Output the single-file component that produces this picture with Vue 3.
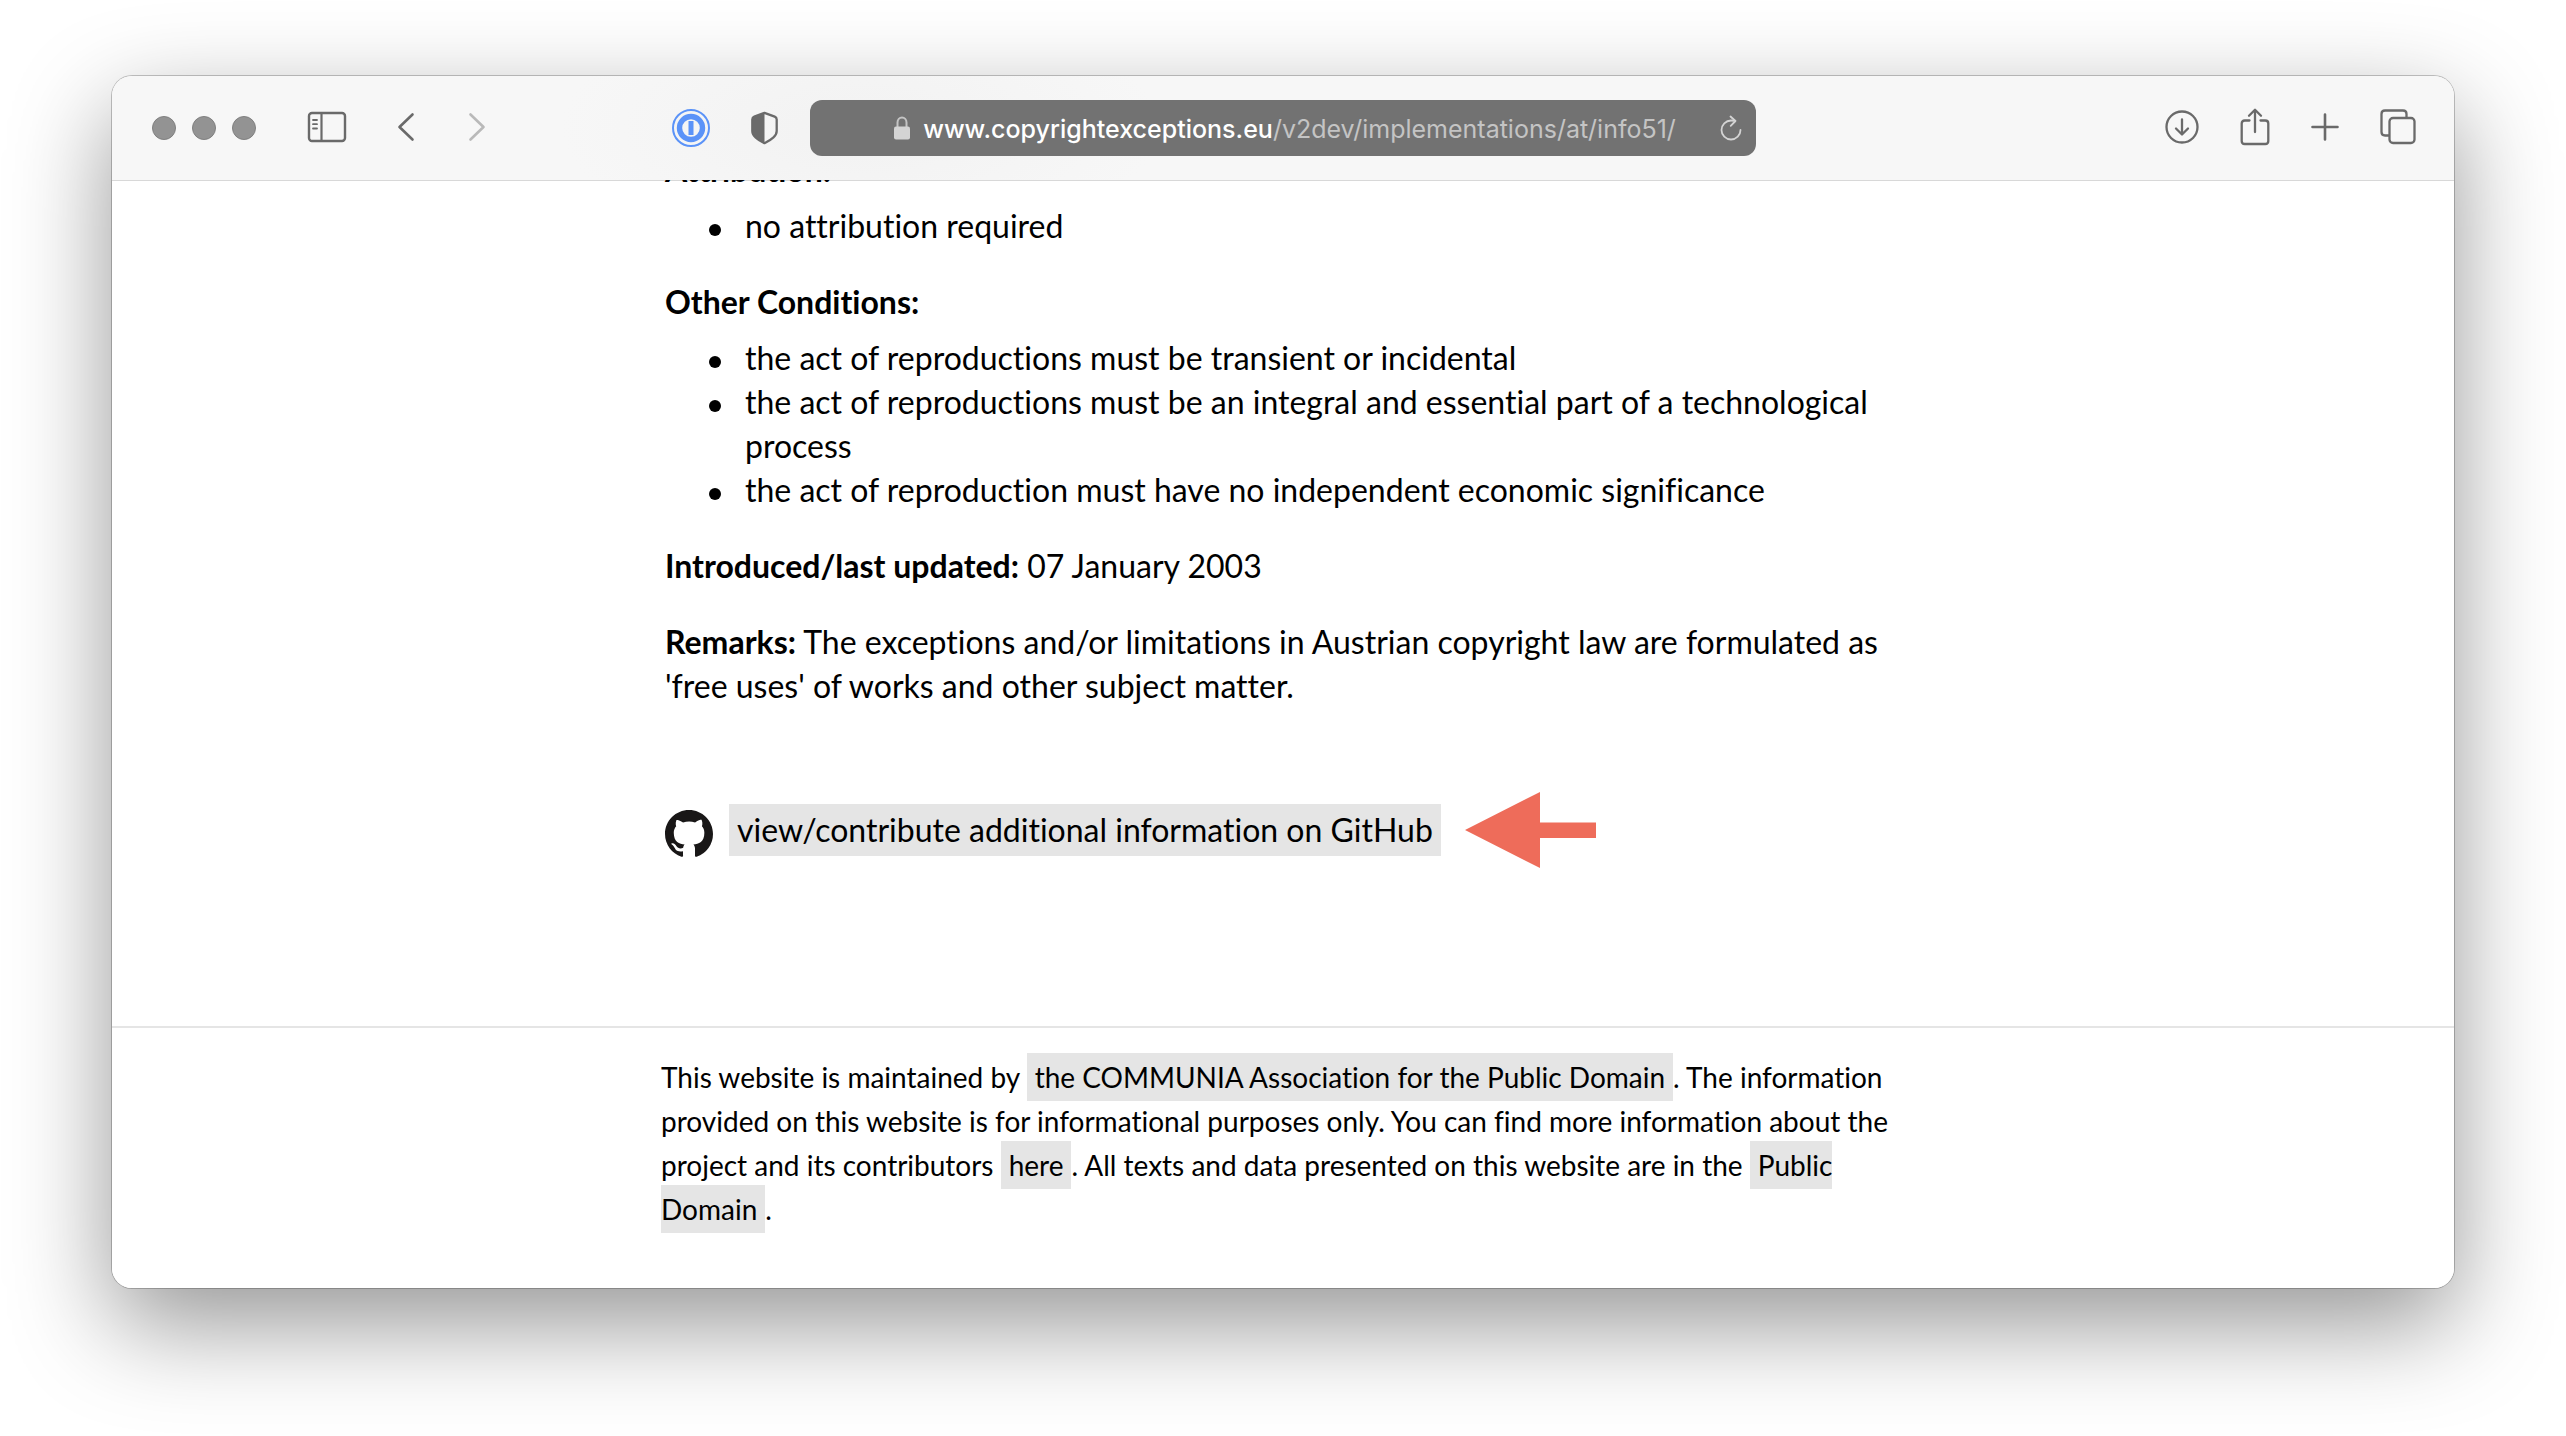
<script setup>
const conditions = [
  'the act of reproductions must be transient or incidental',
  'the act of reproductions must be an integral and essential part of a technological process',
  'the act of reproduction must have no independent economic significance',
]
</script>

<template>
  <div class="desktop">
    <div class="window">
      <header class="toolbar">
        <div class="side">
          <div class="lights">
            <button class="light" aria-label="Close"></button>
            <button class="light" aria-label="Minimize"></button>
            <button class="light" aria-label="Zoom"></button>
          </div>
          <button class="tool sidebar" aria-label="Show sidebar">
            <svg width="40" height="32" viewBox="0 0 40 32" fill="none" stroke="#6a6a6a">
              <rect x="2" y="2" width="36" height="28" rx="3" stroke-width="2.4" />
              <path d="M14.5 2v28" stroke-width="2.2" />
              <path d="M6 9h4M6 13.200h4M6 17.500h4" stroke-width="1.8" stroke-linecap="round" />
            </svg>
          </button>
          <button class="tool back" aria-label="Back">
            <svg width="18" height="30" viewBox="0 0 18 30" fill="none" stroke="#6a6a6a" stroke-width="2.600" stroke-linecap="round" stroke-linejoin="round">
              <path d="M15.500 2.500 2.500 15l13 12.500" />
            </svg>
          </button>
          <button class="tool forward" aria-label="Forward" disabled>
            <svg width="18" height="30" viewBox="0 0 18 30" fill="none" stroke="#b9b9b9" stroke-width="2.600" stroke-linecap="round" stroke-linejoin="round">
              <path d="M2.500 2.500l13 12.500-13 12.500" />
            </svg>
          </button>
          <div class="extensions">
            <button class="tool" aria-label="1Password">
              <svg width="38" height="38" viewBox="0 0 38 38" fill="none">
                <circle cx="19" cy="19" r="18" stroke="#5b93f8" stroke-width="2" />
                <circle cx="19" cy="19" r="11.500" stroke="#5b93f8" stroke-width="5.400" />
                <rect x="16.500" y="12" width="5" height="14" fill="#5b93f8" />
              </svg>
            </button>
            <button class="tool" aria-label="Privacy report">
              <svg width="27" height="34" viewBox="0 0 27 34">
                <path d="M13.500 1.800 3.300 5.600Q1.300 6.400 1.300 8.500V20q0 3.600 3.200 6.300 3.500 3.200 9 5.900 5.500-2.700 9-5.900 3.200-2.700 3.200-6.300V8.500q0-2.100-2-2.900Z" fill="none" stroke="#6a6a6a" stroke-width="2.300" stroke-linejoin="round" />
                <path d="M13.500 1.800 3.300 5.600Q1.300 6.400 1.300 8.500V20q0 3.600 3.200 6.300 3.500 3.200 9 5.900Z" fill="#6a6a6a" />
              </svg>
            </button>
          </div>
        </div>

        <div class="address">
          <button class="url">
            <svg class="lock" width="16" height="24" viewBox="0 0 16 24">
              <path d="M3.500 12V6.500a4.500 5 0 0 1 9 0V12" fill="none" stroke="#c4c4c4" stroke-width="2" />
              <rect x="0" y="10.500" width="16" height="13" rx="2" fill="#d4d4d4" />
            </svg>
            <span><span class="host">www.copyrightexceptions.eu</span>/v2dev/implementations/at/info51/</span>
          </button>
          <button class="tool reload" aria-label="Reload">
            <svg width="22" height="26" viewBox="0 0 22 26" fill="none" stroke="#d4d4d4" stroke-width="1.800" stroke-linecap="round" stroke-linejoin="round">
              <path d="M20.500 15A9.500 9.500 0 1 1 11 5.500q2 0 4 .4" />
              <path d="M10.500 1.500l5 4.500-4.800 4.800" />
            </svg>
          </button>
        </div>

        <div class="side actions">
          <button class="tool" aria-label="Downloads">
            <svg width="34" height="34" viewBox="0 0 34 34" fill="none" stroke="#6a6a6a" stroke-width="2.300" stroke-linecap="round" stroke-linejoin="round">
              <circle cx="17" cy="17" r="15.500" />
              <path d="M17 9.500V24M11 18.500l6 6 6-6" />
            </svg>
          </button>
          <button class="tool" aria-label="Share">
            <svg width="30" height="38" viewBox="0 0 30 38" fill="none" stroke="#6a6a6a" stroke-width="2.300" stroke-linecap="round" stroke-linejoin="round">
              <path d="M9.500 12.500H4.700q-3 0-3 3V33q0 3 3 3h20.600q3 0 3-3V15.500q0-3-3-3h-4.800" />
              <path d="M15 24V2M9 7.700l6-6 6 6" />
            </svg>
          </button>
          <button class="tool" aria-label="New tab">
            <svg width="28" height="28" viewBox="0 0 28 28" fill="none" stroke="#6a6a6a" stroke-width="2.600" stroke-linecap="round">
              <path d="M14 1.500v25M1.500 14h25" />
            </svg>
          </button>
          <button class="tool" aria-label="Show all tabs">
            <svg width="36" height="36" viewBox="0 0 36 36" fill="none" stroke="#6a6a6a" stroke-width="2.300">
              <path d="M9.500 26.500H5q-3.500 0-3.500-3.500V5q0-3.500 3.500-3.500h18Q26.500 1.500 26.500 5v4" />
              <rect x="9.500" y="9" width="25" height="25" rx="3.500" />
            </svg>
          </button>
        </div>
      </header>

      <main class="page">
        <article class="entry">
          <h2>Attribution:</h2>
          <ul>
            <li>no attribution required</li>
          </ul>
          <h2>Other Conditions:</h2>
          <ul>
            <li v-for="item in conditions" :key="item">{{ item }}</li>
          </ul>
          <p><strong>Introduced/last updated:</strong> 07 January 2003</p>
          <p><strong>Remarks:</strong> The exceptions and/or limitations in Austrian copyright law are formulated as 'free uses' of works and other subject matter.</p>
          <div class="contribute">
            <svg class="octocat" width="48" height="48" viewBox="0 0 16 16" fill="#191717">
              <path d="M8 0C3.580 0 0 3.580 0 8c0 3.540 2.290 6.530 5.470 7.590.4.070.55-.17.55-.38 0-.19-.01-.82-.01-1.490-2.010.37-2.530-.49-2.690-.94-.09-.23-.48-.94-.82-1.130-.28-.15-.68-.52-.01-.53.63-.01 1.080.58 1.230.82.72 1.210 1.870.87 2.330.66.07-.52.28-.87.51-1.070-1.780-.2-3.640-.89-3.640-3.950 0-.87.31-1.590.82-2.150-.08-.2-.36-1.020.08-2.120 0 0 .67-.21 2.200.82.64-.18 1.320-.27 2-.27s1.360.09 2 .27c1.530-1.040 2.200-.82 2.200-.82.44 1.100.16 1.920.08 2.120.51.56.82 1.270.82 2.150 0 3.070-1.870 3.750-3.650 3.950.29.25.54.73.54 1.480 0 1.070-.01 1.930-.01 2.200 0 .21.15.46.55.38A8.010 8.010 0 0 0 16 8c0-4.420-3.580-8-8-8Z" />
            </svg>
            <a class="mark" href="#github">view/contribute additional information on GitHub</a>
            <svg class="arrow" width="131" height="76" viewBox="0 0 131 76" fill="#ee6c5a">
              <path d="M0 38 75 0v30.500h56v15.500H75V76Z" />
            </svg>
          </div>
        </article>
        <footer class="footer">
          <p>This website is maintained by <a class="mark" href="#communia">the COMMUNIA Association for the Public Domain</a>. The information provided on this website is for informational purposes only. You can find more information about the project and its contributors <a class="mark" href="#about">here</a>. All texts and data presented on this website are in the <a class="mark" href="#license">Public Domain</a>.</p>
        </footer>
      </main>
    </div>
  </div>
</template>

<style>
body {
  margin: 0;
  background: #fff;
}
</style>

<style scoped>
.desktop {
  padding: 76px 112px 148px;
  overflow: hidden;
}
.window {
  border-radius: 20px;
  background: #fff;
  box-shadow: 0 0 0 1px rgba(0, 0, 0, 0.22), 0 36px 100px rgba(0, 0, 0, 0.42);
}
button {
  padding: 0;
  border: 0;
  background: none;
  font: inherit;
  color: inherit;
}
.toolbar {
  display: grid;
  grid-template-columns: 1fr minmax(0, 946px) 1fr;
  align-items: center;
  height: 104px;
  border-radius: 20px 20px 0 0;
  background: radial-gradient(ellipse 300px 120px at 32% 50%, #f2f2f2, #f7f7f7);
}
.side {
  display: flex;
  align-items: center;
  padding: 0 32px 0 40px;
}
.lights {
  display: flex;
  gap: 16px;
}
.light {
  width: 24px;
  height: 24px;
  border: 1px solid #808080;
  border-radius: 50%;
  background: #939393;
}
.tool {
  display: flex;
}
.side > .tool {
  padding-bottom: 2px;
}
.sidebar {
  margin-left: 51px;
}
.back {
  margin-left: 50px;
}
.forward {
  margin-left: 53px;
}
.extensions {
  display: flex;
  align-items: center;
  gap: 41px;
  margin-left: auto;
}
.address {
  display: flex;
  align-items: center;
  height: 56px;
  padding: 0 14px 0 40px;
  border-radius: 12px;
  background: #727272;
}
.url {
  flex: 1;
  display: flex;
  justify-content: center;
  align-items: center;
  gap: 13px;
  font-family: Inter, "Liberation Sans", sans-serif;
  font-size: 25px;
  line-height: 32px;
  color: #c4c4c4;
  white-space: nowrap;
}
.url > span {
  padding-top: 2px;
}
.host {
  font-weight: 500;
  color: #fff;
}
.actions {
  justify-content: flex-end;
  gap: 41px;
  padding: 0 38px;
}
.page {
  overflow: hidden;
  border-radius: 0 0 20px 20px;
  background: linear-gradient(#d8d8d8, #d8d8d8) top / 100% 1px no-repeat #fff;
  font-family: Lato, "Liberation Sans", sans-serif;
  font-size: 32px;
  font-variant-ligatures: none;
  line-height: 44px;
  color: #000;
}
.entry {
  max-width: 1236px;
  margin: -32px auto 0;
  padding-bottom: 158px;
}
h2 {
  margin: 0 0 12px;
  font-size: 32px;
  line-height: 44px;
}
ul {
  margin: 0 0 32px;
  padding-left: 44px;
  list-style: none;
}
li {
  display: flex;
}
li::before {
  content: "";
  flex: none;
  width: 12px;
  height: 12px;
  margin: 20px 24px 0 0;
  border-radius: 50%;
  background: #000;
}
p {
  margin: 0 0 32px;
}
.contribute {
  display: flex;
  align-items: center;
  margin-top: 84px;
}
.octocat {
  margin: 8px 16px 0 0;
}
.arrow {
  margin-left: 24px;
}
.mark {
  padding: 7px 8px;
  background: #e5e5e5;
  color: inherit;
  text-decoration: none;
}
.contribute .mark {
  line-height: 38px;
}
.footer {
  padding: 27px 0 57px;
  border-top: 2px solid #e5e5e5;
  font-size: 28px;
}
.footer p {
  max-width: 1244px;
  margin: 0 auto;
}
</style>
